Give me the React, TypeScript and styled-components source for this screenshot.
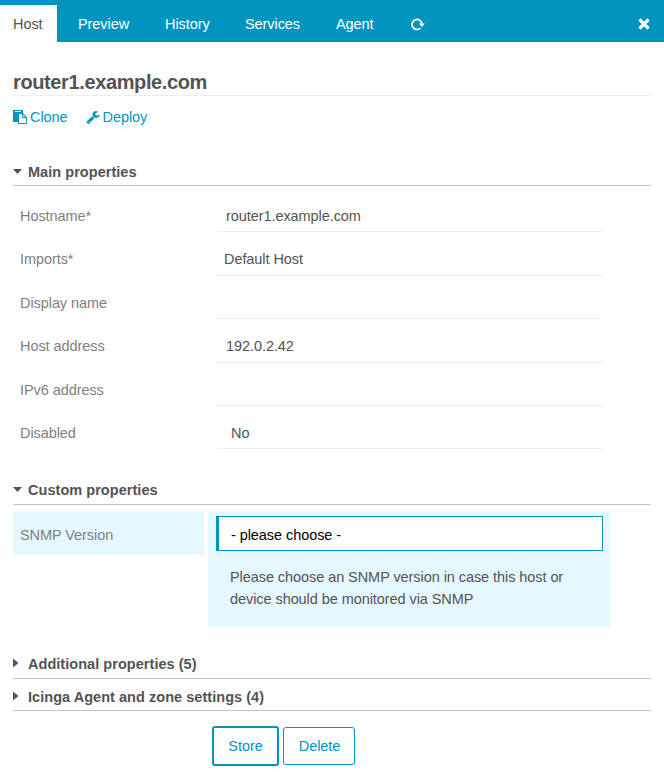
import React from "react";
import styled, { createGlobalStyle } from "styled-components";

const BLUE = "#0095bf";
const PALE = "#e5f8ff";

const GlobalStyle = createGlobalStyle`
  * { box-sizing: border-box; }
  body {
    margin: 0;
    background: #fff;
    color: #535353;
    font-family: "Liberation Sans", Arial, sans-serif;
    font-size: 14.5px;
    line-height: 22px;
    letter-spacing: -0.07px;
  }
`;

const Page = styled.div`
  height: 775px;
  overflow: hidden;
`;

const TabBar = styled.nav`
  display: flex;
  height: 42px;
  padding: 5px 14px 0 0;
  background: ${BLUE};
`;

const Tab = styled.a<{ $width: number; $active?: boolean }>`
  display: block;
  width: ${(p) => p.$width}px;
  padding: 8px 0 0 ${(p) => (p.$active ? 13 : 21)}px;
  background: ${(p) => (p.$active ? "#fff" : "transparent")};
  color: ${(p) => (p.$active ? "#535353" : "#fff")};
  white-space: nowrap;
`;

const IconTab = styled.a<{ $right?: boolean }>`
  display: flex;
  align-items: center;
  margin-left: ${(p) => (p.$right ? "auto" : "16px")};
  color: #fff;
`;

const Content = styled.main`
  padding: 29px 14px 0 13px;
`;

const Title = styled.h1`
  margin: 0;
  height: 25px;
  border-bottom: 1px solid #eee;
  font-size: 20px;
  line-height: 22px;
  font-weight: bold;
  letter-spacing: -0.38px;
`;

const Actions = styled.div`
  display: flex;
  gap: 18px;
  height: 22px;
  margin-top: 10px;
  color: ${BLUE};
`;

const Action = styled.a`
  display: flex;
  align-items: center;
  gap: 3px;
`;

const Section = styled.h3<{ $top: number; $height: number }>`
  display: flex;
  margin: ${(p) => p.$top}px -1px 0 0;
  height: ${(p) => p.$height}px;
  border-bottom: 1px solid #c4c4c4;
  font-size: 14.5px;
  line-height: 22px;
  font-weight: bold;
  letter-spacing: 0.04px;
`;

const Marker = styled.svg`
  width: 9px;
  height: 22px;
  margin-right: 6px;
  fill: #535353;
`;

const Fields = styled.dl`
  margin: 7px 0 0;
`;

const Row = styled.div`
  display: flex;
  gap: 4px;
  height: 43.4px;
`;

const Label = styled.dt<{ $active?: boolean }>`
  width: 191px;
  height: 43px;
  padding: 12px 7px 0;
  background: ${(p) => (p.$active ? PALE : "transparent")};
  color: #7f7f7f;
`;

const Cell = styled.dd<{ $active?: boolean }>`
  width: 402px;
  height: ${(p) => (p.$active ? "115px" : "43px")};
  margin: 0;
  padding: 4px 7px 0 8px;
  background: ${(p) => (p.$active ? PALE : "transparent")};
`;

const Field = styled.div<{ $inset: number; $indent: number; $height: number }>`
  height: ${(p) => p.$height}px;
  margin-left: ${(p) => p.$inset}px;
  padding: 8px 0 0 ${(p) => p.$indent}px;
  border-bottom: 1px solid #eee;
`;

const Select = styled.div`
  height: 35px;
  padding: 7px 0 0 12px;
  border: 1px solid ${BLUE};
  border-left-width: 3px;
  background: #fff;
  color: #000;
`;

const Hint = styled.p`
  margin: 15px 0 0 14px;
`;

const Buttons = styled.div`
  display: flex;
  align-items: center;
  gap: 4px;
  margin: 15px 0 0 199px;
`;

const Button = styled.button<{ $primary?: boolean }>`
  width: ${(p) => (p.$primary ? 67 : 72)}px;
  height: ${(p) => (p.$primary ? 40 : 38)}px;
  padding: 0 0 0 ${(p) => (p.$primary ? 0 : 1)}px;
  border: ${(p) => (p.$primary ? 2 : 1)}px solid ${BLUE};
  border-radius: 3px;
  background: #fff;
  color: ${BLUE};
  font: inherit;
  letter-spacing: inherit;
`;

const Arrow = ({ open = false }: { open?: boolean }) => (
  <Marker viewBox="0 0 9 22">
    <path d={open ? "M0 8h9L4.5 13z" : "M0 5.5v9L5.5 10z"} />
  </Marker>
);

const fields = [
  { label: "Hostname*", value: "router1.example.com", inset: 1, indent: 9, height: 35 },
  { label: "Imports*", value: "Default Host", inset: 0, indent: 8, height: 36 },
  { label: "Display name", value: "", inset: 1, indent: 9, height: 35 },
  { label: "Host address", value: "192.0.2.42", inset: 1, indent: 9, height: 36 },
  { label: "IPv6 address", value: "", inset: 1, indent: 9, height: 35 },
  { label: "Disabled", value: "No", inset: 1, indent: 14, height: 35 },
];

export default function App() {
  return (
    <Page>
      <GlobalStyle />
      <TabBar>
        <Tab $width={57} $active>Host</Tab>
        <Tab $width={87}>Preview</Tab>
        <Tab $width={80}>History</Tab>
        <Tab $width={91}>Services</Tab>
        <Tab $width={80}>Agent</Tab>
        <IconTab>
          <svg width="14" height="14" viewBox="0 0 14 14">
            <path d="M9.4 11.2A5 5 0 1 1 11 6.8" fill="none" stroke="currentColor" strokeWidth="1.7" />
            <path d="M7.8 6.6h6.1L10.9 10z" fill="currentColor" />
          </svg>
        </IconTab>
        <IconTab $right>
          <svg width="12" height="12" viewBox="0 0 12 12">
            <path d="M2.6 2.6l6.8 6.8M9.4 2.6l-6.8 6.8" stroke="currentColor" strokeWidth="3.2" strokeLinecap="square" />
          </svg>
        </IconTab>
      </TabBar>
      <Content>
        <Title>router1.example.com</Title>
        <Actions>
          <Action>
            <svg width="14" height="14" viewBox="0 0 1792 1792" fill="currentColor">
              <path d="M768 1664h896v-640h-416q-40 0-68-28t-28-68v-416h-384v1152zm256-1440v-64q0-13-9.5-22.5t-22.5-9.5h-704q-13 0-22.5 9.5t-9.5 22.5v64q0 13 9.5 22.5t22.5 9.5h704q13 0 22.5-9.5t9.5-22.5zm256 672h299l-299-299v299zm512 128v672q0 40-28 68t-68 28h-960q-40 0-68-28t-28-68v-160h-544q-40 0-68-28t-28-68v-1344q0-40 28-68t68-28h1088q40 0 68 28t28 68v328q21 13 36 28l408 408q28 28 48 76t20 88z" />
            </svg>
            Clone
          </Action>
          <Action>
            <svg width="14" height="14" viewBox="0 0 1792 1792" fill="currentColor">
              <path d="M448 1472q0-26-19-45t-45-19-45 19-19 45 19 45 45 19 45-19 19-45zm644-420l-682 682q-37 37-90 37-52 0-91-37l-106-108q-38-36-38-90 0-53 38-91l681-681q39 98 114.5 173.5t173.5 114.5zm634-435q0 39-23 106-47 134-164.5 217.5t-258.5 83.5q-185 0-316.5-131.5t-131.5-316.5 131.5-316.5 316.5-131.5q58 0 121.5 16.5t107.5 46.5q16 11 16 28t-16 28l-293 169v224l193 107q5-3 79-48.5t135.5-81 70.5-35.5q15 0 23.5 10t8.5 25z" />
            </svg>
            Deploy
          </Action>
        </Actions>
        <Section $top={33} $height={25}><Arrow open />Main properties</Section>
        <Fields>
          {fields.map((f) => (
            <Row key={f.label}>
              <Label>{f.label}</Label>
              <Cell>
                <Field $inset={f.inset} $indent={f.indent} $height={f.height}>{f.value}</Field>
              </Cell>
            </Row>
          ))}
        </Fields>
        <Section $top={25.6} $height={26}><Arrow open />Custom properties</Section>
        <Fields>
          <Row>
            <Label $active>SNMP Version</Label>
            <Cell $active>
              <Select>- please choose -</Select>
              <Hint>Please choose an SNMP version in case this host or device should be monitored via SNMP</Hint>
            </Cell>
          </Row>
        </Fields>
        <Section $top={97.6} $height={26}><Arrow />Additional properties (5)</Section>
        <Section $top={7} $height={25}><Arrow />Icinga Agent and zone settings (4)</Section>
        <Buttons>
          <Button $primary>Store</Button>
          <Button>Delete</Button>
        </Buttons>
      </Content>
    </Page>
  );
}
